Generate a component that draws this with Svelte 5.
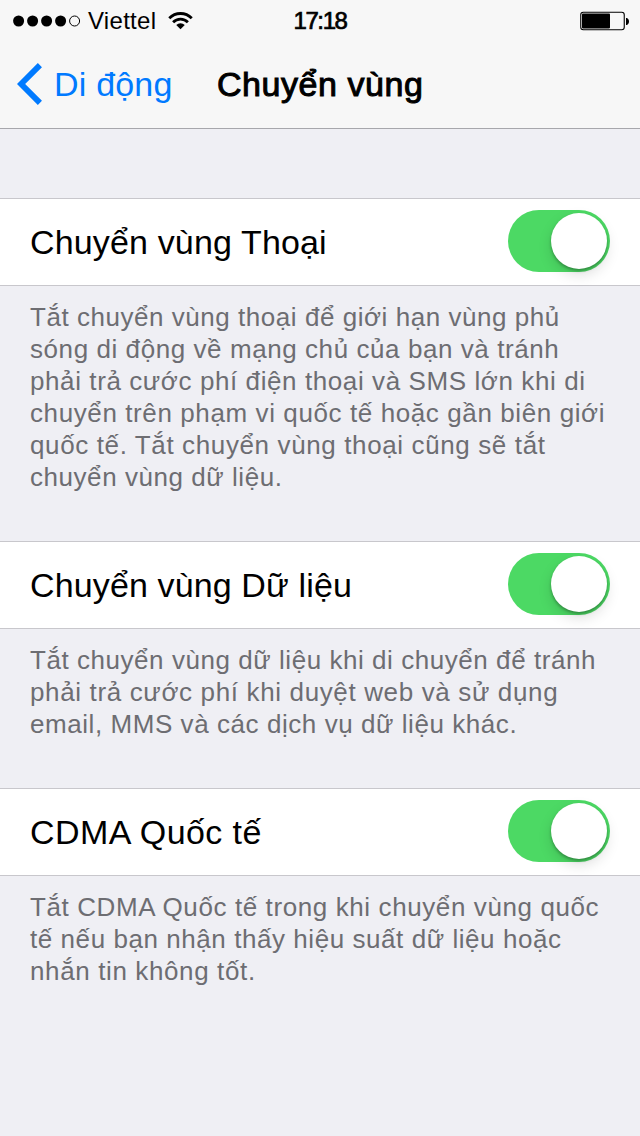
<script>
  let groups = $state([
    {
      label: 'Chuyển vùng Thoại',
      tracking: 0.15,
      on: true,
      note: [
        ['Tắt chuyển vùng thoại để giới hạn vùng phủ', 0.54],
        ['sóng di động về mạng chủ của bạn và tránh', 0.57],
        ['phải trả cước phí điện thoại và SMS lớn khi di', 0.59],
        ['chuyển trên phạm vi quốc tế hoặc gần biên giới', 0.6],
        ['quốc tế. Tắt chuyển vùng thoại cũng sẽ tắt', 0.62],
        ['chuyển vùng dữ liệu.', 0.55]
      ]
    },
    {
      label: 'Chuyển vùng Dữ liệu',
      tracking: 0.13,
      on: true,
      note: [
        ['Tắt chuyển vùng dữ liệu khi di chuyển để tránh', 0.55],
        ['phải trả cước phí khi duyệt web và sử dụng', 0.64],
        ['email, MMS và các dịch vụ dữ liệu khác.', 0.56]
      ]
    },
    {
      label: 'CDMA Quốc tế',
      tracking: 0.42,
      on: true,
      note: [
        ['Tắt CDMA Quốc tế trong khi chuyển vùng quốc', 0.6],
        ['tế nếu bạn nhận thấy hiệu suất dữ liệu hoặc', 0.56],
        ['nhắn tin không tốt.', 0.62]
      ]
    }
  ]);
</script>

<div class="screen">
  <header>
    <div class="status">
      <div class="carrier">
        <svg width="68" height="12" viewBox="0 0 68 12">
          <circle cx="5.6" cy="6" r="5.5" />
          <circle cx="19.6" cy="6" r="5.5" />
          <circle cx="33.6" cy="6" r="5.5" />
          <circle cx="47.6" cy="6" r="5.5" />
          <circle cx="61.6" cy="6" r="5" fill="none" stroke="#000" />
        </svg>
        <span class="name">Viettel</span>
        <svg class="wifi" width="25" height="18" viewBox="0 0 26 18">
          <path d="M1.3 6.100a16.400 16.400 0 0 1 23.400 0M5.300 10.300a10.800 10.800 0 0 1 15.400 0" fill="none" stroke="#000" stroke-width="2.9" />
          <path d="M8.600 13.200a6.200 6.200 0 0 1 8.800 0L13 17.600z" />
        </svg>
      </div>
      <span class="time">17:18</span>
      <svg class="battery" width="50" height="20" viewBox="0 0 50 20">
        <rect x="0.75" y="1.25" width="43.5" height="17.5" rx="2.5" fill="none" stroke="#000" stroke-width="1.1" />
        <rect x="2" y="2.600" width="28" height="14.800" rx="0.8" />
        <path d="M46 7h1c2.700 1.500 2.700 5.500 0 7h-1z" />
      </svg>
    </div>
    <nav>
      <button class="back">
        <svg width="27" height="42" viewBox="0 0 27 42"><path d="M23.900 2.100L5.100 21L23.900 39.900" fill="none" stroke="#007aff" stroke-width="5.800" /></svg>
        <span>Di động</span>
      </button>
      <h1>Chuyển vùng</h1>
    </nav>
  </header>

  <main>
    {#each groups as group}
      <section>
        <div class="row">
          <span class="label" style="letter-spacing: {group.tracking}px">{group.label}</span>
          <button class="switch" class:on={group.on} role="switch" aria-checked={group.on} aria-label={group.label} onclick={() => (group.on = !group.on)}>
            <span class="knob"></span>
          </button>
        </div>
        <div class="note">
          {#each group.note as [line, tracking]}<span style="letter-spacing: {tracking}px">{line}</span>{/each}
        </div>
      </section>
    {/each}
  </main>
</div>

<style>
  :global(body) { margin: 0; background: #efeff4; }
  .screen {
    width: 640px;
    height: 1136px;
    overflow: hidden;
    background: #efeff4;
    color: #000;
    font-family: 'Liberation Sans', Arial, sans-serif;
  }
  button { border: 0; padding: 0; margin: 0; background: none; font: inherit; }
  svg { display: block; flex: none; }
  header { height: 128px; background: #f7f7f7; border-bottom: 1px solid #a7a7ac; }
  .status {
    box-sizing: border-box;
    display: grid;
    grid-template-columns: 1fr auto 1fr;
    align-items: center;
    height: 40px;
    padding: 2px 10px 0 13px;
    font-size: 24px;
    line-height: 38px;
  }
  .carrier { display: flex; align-items: center; }
  .name { margin-left: 7px; letter-spacing: 0.3px; }
  .wifi { margin-left: 12px; }
  .time { -webkit-text-stroke: 0.7px #000; letter-spacing: -1.4px; margin-right: 3px; }
  .battery { justify-self: end; }
  nav { display: grid; grid-template-columns: 217px 1fr; height: 88px; align-items: center; }
  .back { display: flex; align-items: center; padding-left: 16px; color: #007aff; font-size: 34px; line-height: 88px; }
  .back span { margin-left: 11px; letter-spacing: 0.2px; }
  h1 { margin: 0; font-size: 34px; line-height: 88px; font-weight: 400; -webkit-text-stroke: 1px #000; letter-spacing: 0.55px; }
  main { padding-top: 69px; }
  .row {
    box-sizing: border-box;
    height: 88px;
    display: flex;
    align-items: center;
    justify-content: space-between;
    padding: 0 30px;
    background: #fff;
    border-top: 1px solid #c8c7cc;
    border-bottom: 1px solid #c8c7cc;
  }
  .label { font-size: 34px; line-height: 86px; white-space: nowrap; }
  .switch { box-sizing: border-box; width: 102px; height: 62px; padding: 3px; border-radius: 31px; background: #e5e5e5; display: flex; margin-top: -2px; }
  .switch.on { background: #4cd964; justify-content: flex-end; }
  .knob { width: 56px; height: 56px; border-radius: 50%; background: #fff; box-shadow: 0 2px 3px rgba(0, 0, 0, 0.28), 0 6px 14px rgba(0, 0, 0, 0.13); }
  .note {
    display: flex;
    flex-direction: column;
    padding: 15px 30px 48px;
    color: #6d6d72;
    font-size: 26px;
    line-height: 32px;
    white-space: nowrap;
  }
</style>
